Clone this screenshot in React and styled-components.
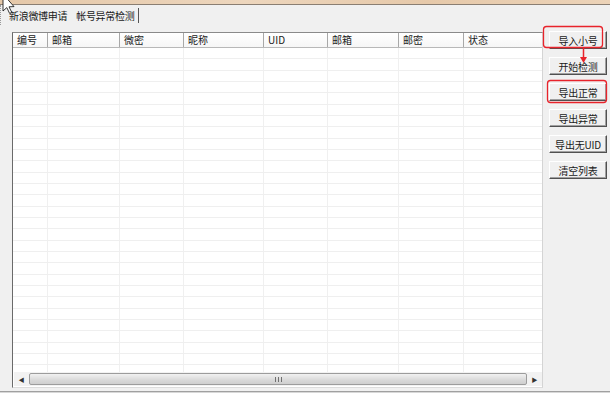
import React from 'react';
import styled, { createGlobalStyle } from 'styled-components';

const GlobalStyle = createGlobalStyle`
	html, body {
		margin: 0;
		padding: 0;
		background: #ffffff;
	}
	body {
		font-family: "Noto Sans CJK SC", "Liberation Sans", sans-serif;
		font-size: 10px;
		color: #1a1a1a;
	}
`;

const columns = [
	{ title: '编号', width: 35 },
	{ title: '邮箱', width: 72 },
	{ title: '微密', width: 64 },
	{ title: '昵称', width: 80 },
	{ title: 'UID', width: 64 },
	{ title: '邮箱', width: 71 },
	{ title: '邮密', width: 65 },
	{ title: '状态', width: 79 },
];

const buttons = ['导入小号', '开始检测', '导出正常', '导出异常', '导出无UID', '清空列表'];

const rowCount = 29;

const Window = styled.div`
	position: relative;
	width: 610px;
	height: 411px;
	overflow: hidden;
	background: #ffffff;
`;

const TitleStrip = styled.div`
	height: 4px;
	background: linear-gradient(90deg, #e4c7a8 0%, #edd6bd 40%, #e6c9aa 70%, #ecd3b8 100%);
	border-bottom: 1px solid #8a7e72;
`;

const TabBar = styled.div`
	height: 20px;
	display: flex;
	align-items: flex-end;
	background: #f0f0f0;
	padding-left: 2px;
	border-left: 1px dotted #9a9a9a;
`;

const Tab = styled.div`
	height: 15px;
	line-height: 15px;
	padding: 0 ${p => (p.$active ? '4px' : '3px')} 0 ${p => (p.$active ? '5px' : '6px')};
	border-right: ${p => (p.$active ? '1px solid #555' : '1px solid transparent')};
	margin-bottom: 2px;
	white-space: nowrap;
	letter-spacing: -0.3px;
`;

const Panel = styled.div`
	height: 367px;
	box-sizing: border-box;
	display: flex;
	align-items: flex-start;
	padding: 7px 0 0 12px;
	background: #f0f0f0;
	border-bottom: 1px solid #a0a0a0;
	box-shadow: 0 1px 0 #d8d8d8;
`;

const ListView = styled.div`
	width: 531px;
	height: 356px;
	box-sizing: border-box;
	display: flex;
	flex-direction: column;
	background: #ffffff;
	border-left: 1px solid #6a6a6a;
	border-top: 1px solid #8a8a8a;
	border-right: 1px solid #d4d4d4;
	border-bottom: 1px solid #dcdcdc;
	overflow: hidden;
`;

const HeaderRow = styled.div`
	display: flex;
	height: 14px;
	flex: none;
	border-bottom: 1px solid #b8b8b8;
	background: linear-gradient(#ffffff, #f6f6f6);
`;

const HeaderCell = styled.div`
	flex: none;
	width: ${p => p.$width}px;
	box-sizing: border-box;
	padding-left: 4px;
	line-height: 13px;
	border-right: 1px solid #a8a8a8;
	white-space: nowrap;
	overflow: hidden;
`;

const Body = styled.div`
	flex: 1;
	overflow: hidden;
`;

const Row = styled.div`
	display: flex;
	height: 11.33px;
	box-sizing: border-box;
	border-bottom: 1px solid #efefef;
`;

const Cell = styled.div`
	flex: none;
	width: ${p => p.$width}px;
	box-sizing: border-box;
	border-right: 1px solid #f0f0f0;
`;

const ScrollBar = styled.div`
	flex: none;
	height: 14px;
	display: flex;
	align-items: stretch;
	margin: 0 0 1px 1px;
	background: #f2f2f2;
`;

const ArrowButton = styled.div`
	width: 15px;
	flex: none;
	display: flex;
	align-items: center;
	justify-content: center;
	font-size: 6px;
	color: #333;
`;

const Thumb = styled.div`
	flex: 1;
	margin: 1px 0;
	border: 1px solid #9c9c9c;
	border-radius: 2px;
	background: linear-gradient(#f1f1f1, #d9d9d9 60%, #cfcfcf);
	display: flex;
	align-items: center;
	justify-content: center;
`;

const Grip = styled.div`
	width: 7px;
	height: 5px;
	background: repeating-linear-gradient(90deg, #707070 0 1px, transparent 1px 3px);
`;

const ButtonColumn = styled.div`
	display: flex;
	flex-direction: column;
	gap: 8px;
	margin-left: 6px;
	margin-top: -1px;
`;

const Button = styled.div`
	width: 58px;
	height: 18px;
	box-sizing: border-box;
	display: flex;
	align-items: center;
	justify-content: center;
	background: #f0f0f0;
	border: 1px solid;
	border-color: #ffffff #505050 #505050 #ffffff;
	box-shadow: inset -1px -1px 0 #a0a0a0;
	white-space: nowrap;
	letter-spacing: -0.2px;
`;

const Overlay = styled.svg`
	position: absolute;
	left: 0;
	top: 0;
	pointer-events: none;
`;

const Cursor = () => (
	<Overlay width="20" height="20" viewBox="0 0 20 20">
		<path
			d="M3 -6 L3 11 L6.8 7.6 L9.6 13.4 L11.8 12.4 L9 6.8 L14 6.6 Z"
			fill="#ffffff"
			stroke="#202020"
			strokeWidth="0.9"
			strokeLinejoin="round"
		/>
	</Overlay>
);

const Annotations = () => (
	<Overlay width="610" height="411" viewBox="0 0 610 411">
		<rect x="543.5" y="26.5" width="59" height="21" rx="3" fill="none" stroke="#e8232b" strokeWidth="1.3" />
		<rect x="547.5" y="80.5" width="59" height="22" rx="3" fill="none" stroke="#e8232b" strokeWidth="1.3" />
		<line x1="583.5" y1="48" x2="583.5" y2="58" stroke="#e8232b" strokeWidth="1.5" />
		<path d="M580 57 L587 57 L583.5 63 Z" fill="#e8232b" />
	</Overlay>
);

const App = () => {
	return (
		<Window>
			<GlobalStyle />
			<TitleStrip />
			<TabBar>
				<Tab>新浪微博申请</Tab>
				<Tab $active>帐号异常检测</Tab>
			</TabBar>
			<Panel>
				<ListView>
					<HeaderRow>
						{columns.map((col, key) => (
							<HeaderCell key={key} $width={col.width}>
								{col.title}
							</HeaderCell>
						))}
					</HeaderRow>
					<Body>
						{Array.from({ length: rowCount }).map((_, r) => (
							<Row key={r}>
								{columns.map((col, key) => (
									<Cell key={key} $width={col.width} />
								))}
							</Row>
						))}
					</Body>
					<ScrollBar>
						<ArrowButton>◀</ArrowButton>
						<Thumb>
							<Grip />
						</Thumb>
						<ArrowButton>▶</ArrowButton>
					</ScrollBar>
				</ListView>
				<ButtonColumn>
					{buttons.map((label, key) => (
						<Button key={key}>{label}</Button>
					))}
				</ButtonColumn>
			</Panel>
			<Annotations />
			<Cursor />
		</Window>
	);
};

export default App;
